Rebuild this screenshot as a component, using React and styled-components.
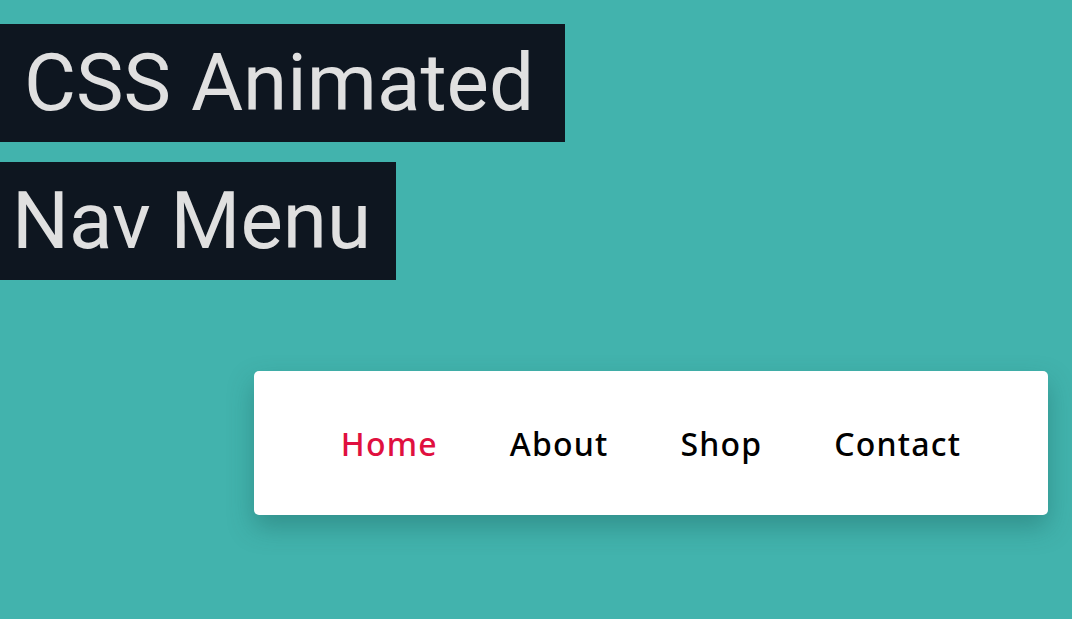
import styled, { createGlobalStyle } from "styled-components";

const GlobalStyle = createGlobalStyle`
	html, body {
		margin: 0;
		padding: 0;
		background: #42b3ad;
		height: 100%;
		overflow: hidden;
	}
`;

const Page = styled.div`
	padding-top: 24px;
	font-family: Roboto, "Liberation Sans", sans-serif;
`;

const Title = styled.h1`
	margin: 0;
	display: flex;
	flex-direction: column;
	align-items: flex-start;
	gap: 20px;
	font-weight: 400;
	font-size: 80px;
	line-height: 118px;
	color: #e0e0e0;
`;

const TitleLine = styled.span`
	display: block;
	background: #0e1620;
	padding: 0 ${(p) => p.$right}px 0 ${(p) => p.$left}px;
	white-space: nowrap;
`;

const NavWrap = styled.div`
	display: flex;
	justify-content: flex-end;
	padding: 91px 24px 0 0;
`;

const Nav = styled.nav`
	width: 794px;
	height: 144px;
	background: #fff;
	border-radius: 5px;
	box-shadow: 0 12px 26px rgba(20, 80, 76, 0.35);
	display: flex;
	align-items: center;
	justify-content: center;
`;

const Link = styled.a`
	padding: 0 36px;
	font-family: "Noto Sans", sans-serif;
	font-size: 32px;
	letter-spacing: 1.2px;
	font-weight: 500;
	color: ${(p) => (p.$active ? "#e0103f" : "#000")};
	text-decoration: none;
`;

export default function App() {
	return (
		<>
			<GlobalStyle />
			<Page>
				<Title>
					<TitleLine $left={24} $right={31}>CSS Animated</TitleLine>
					<TitleLine $left={12} $right={25}>Nav Menu</TitleLine>
				</Title>
				<NavWrap>
					<Nav>
						<Link href="#" $active>Home</Link>
						<Link href="#">About</Link>
						<Link href="#">Shop</Link>
						<Link href="#">Contact</Link>
					</Nav>
				</NavWrap>
			</Page>
		</>
	);
}
